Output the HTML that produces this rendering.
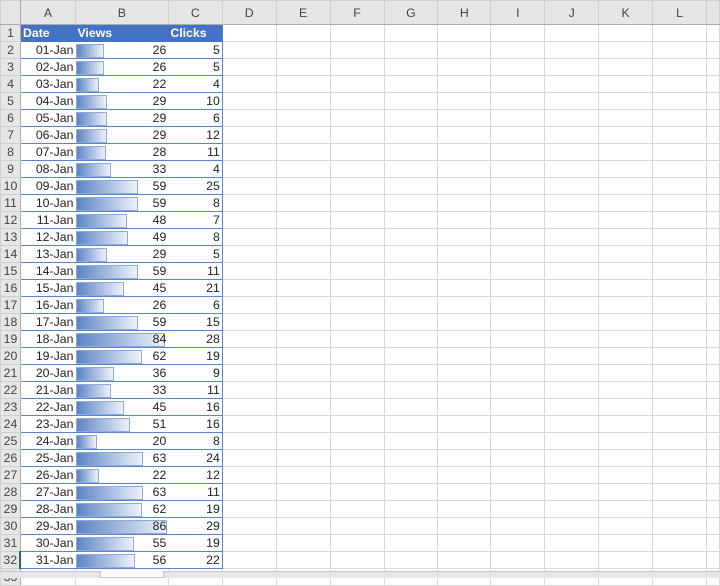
<!DOCTYPE html><html><head><style>
body{margin:0;width:720px;height:577px;overflow:hidden;background:#fff;font-family:"Liberation Sans",Calibri,sans-serif;font-size:12.3px;color:#222}
table{border-collapse:collapse;table-layout:fixed;position:absolute;left:0;top:0}
td{height:16px;border:1px solid #d9d9d9;padding:0 2px;white-space:nowrap;overflow:hidden;line-height:16px}
tr.h td{height:23px;background:#e6e6e6;text-align:center;color:#444;border-color:#cfcfcf;border-bottom:1px solid #ababab}
td.n{background:#e6e6e6;text-align:center;color:#444;border-color:#cfcfcf;border-right:1px solid #ababab;padding:0}
tr.t1 td.d{background:#4472c4;color:#fff;font-weight:bold;text-align:left;border-color:#4472c4}
td.d{text-align:right;border-top:1px solid #5b84d0;border-bottom:1px solid #5b84d0;border-left:none;border-right:none}
td.c{border-right:1px solid #5b84d0!important}
td.b{position:relative}
td.b i{position:absolute;left:1px;top:2px;height:12px;border:1px solid #8fa9d9;background:linear-gradient(to right,#5b84c4,#eef2fa)}
td.b span{position:relative}
</style></head><body>
<table>
<colgroup><col style="width:20px"><col style="width:55px"><col style="width:93px"><col style="width:54px"><col style="width:54px"><col style="width:54px"><col style="width:54px"><col style="width:54px"><col style="width:53px"><col style="width:54px"><col style="width:54px"><col style="width:54px"><col style="width:54px"><col style="width:13px"></colgroup>
<tr class="h"><td style="border-right:1px solid #ababab"></td><td>A</td><td>B</td><td>C</td><td>D</td><td>E</td><td>F</td><td>G</td><td>H</td><td>I</td><td>J</td><td>K</td><td>L</td><td></td></tr>
<tr class="t1"><td class="n">1</td><td class="d">Date</td><td class="d">Views</td><td class="d c">Clicks</td><td></td><td></td><td></td><td></td><td></td><td></td><td></td><td></td><td></td><td></td></tr>
<tr><td class="n">2</td><td class="d">01-Jan</td><td class="d b"><i style="width:26px"></i><span>26</span></td><td class="d c">5</td><td></td><td></td><td></td><td></td><td></td><td></td><td></td><td></td><td></td><td></td></tr>
<tr><td class="n">3</td><td class="d">02-Jan</td><td class="d b"><i style="width:26px"></i><span>26</span></td><td class="d c">5</td><td></td><td></td><td></td><td></td><td></td><td></td><td></td><td></td><td></td><td></td></tr>
<tr><td class="n">4</td><td class="d">03-Jan</td><td class="d b"><i style="width:21px"></i><span>22</span></td><td class="d c">4</td><td></td><td></td><td></td><td></td><td></td><td></td><td></td><td></td><td></td><td></td></tr>
<tr><td class="n">5</td><td class="d">04-Jan</td><td class="d b"><i style="width:29px"></i><span>29</span></td><td class="d c">10</td><td></td><td></td><td></td><td></td><td></td><td></td><td></td><td></td><td></td><td></td></tr>
<tr><td class="n">6</td><td class="d">05-Jan</td><td class="d b"><i style="width:29px"></i><span>29</span></td><td class="d c">6</td><td></td><td></td><td></td><td></td><td></td><td></td><td></td><td></td><td></td><td></td></tr>
<tr><td class="n">7</td><td class="d">06-Jan</td><td class="d b"><i style="width:29px"></i><span>29</span></td><td class="d c">12</td><td></td><td></td><td></td><td></td><td></td><td></td><td></td><td></td><td></td><td></td></tr>
<tr><td class="n">8</td><td class="d">07-Jan</td><td class="d b"><i style="width:28px"></i><span>28</span></td><td class="d c">11</td><td></td><td></td><td></td><td></td><td></td><td></td><td></td><td></td><td></td><td></td></tr>
<tr><td class="n">9</td><td class="d">08-Jan</td><td class="d b"><i style="width:33px"></i><span>33</span></td><td class="d c">4</td><td></td><td></td><td></td><td></td><td></td><td></td><td></td><td></td><td></td><td></td></tr>
<tr><td class="n">10</td><td class="d">09-Jan</td><td class="d b"><i style="width:60px"></i><span>59</span></td><td class="d c">25</td><td></td><td></td><td></td><td></td><td></td><td></td><td></td><td></td><td></td><td></td></tr>
<tr><td class="n">11</td><td class="d">10-Jan</td><td class="d b"><i style="width:60px"></i><span>59</span></td><td class="d c">8</td><td></td><td></td><td></td><td></td><td></td><td></td><td></td><td></td><td></td><td></td></tr>
<tr><td class="n">12</td><td class="d">11-Jan</td><td class="d b"><i style="width:49px"></i><span>48</span></td><td class="d c">7</td><td></td><td></td><td></td><td></td><td></td><td></td><td></td><td></td><td></td><td></td></tr>
<tr><td class="n">13</td><td class="d">12-Jan</td><td class="d b"><i style="width:50px"></i><span>49</span></td><td class="d c">8</td><td></td><td></td><td></td><td></td><td></td><td></td><td></td><td></td><td></td><td></td></tr>
<tr><td class="n">14</td><td class="d">13-Jan</td><td class="d b"><i style="width:29px"></i><span>29</span></td><td class="d c">5</td><td></td><td></td><td></td><td></td><td></td><td></td><td></td><td></td><td></td><td></td></tr>
<tr><td class="n">15</td><td class="d">14-Jan</td><td class="d b"><i style="width:60px"></i><span>59</span></td><td class="d c">11</td><td></td><td></td><td></td><td></td><td></td><td></td><td></td><td></td><td></td><td></td></tr>
<tr><td class="n">16</td><td class="d">15-Jan</td><td class="d b"><i style="width:46px"></i><span>45</span></td><td class="d c">21</td><td></td><td></td><td></td><td></td><td></td><td></td><td></td><td></td><td></td><td></td></tr>
<tr><td class="n">17</td><td class="d">16-Jan</td><td class="d b"><i style="width:26px"></i><span>26</span></td><td class="d c">6</td><td></td><td></td><td></td><td></td><td></td><td></td><td></td><td></td><td></td><td></td></tr>
<tr><td class="n">18</td><td class="d">17-Jan</td><td class="d b"><i style="width:60px"></i><span>59</span></td><td class="d c">15</td><td></td><td></td><td></td><td></td><td></td><td></td><td></td><td></td><td></td><td></td></tr>
<tr><td class="n">19</td><td class="d">18-Jan</td><td class="d b"><i style="width:87px"></i><span>84</span></td><td class="d c">28</td><td></td><td></td><td></td><td></td><td></td><td></td><td></td><td></td><td></td><td></td></tr>
<tr><td class="n">20</td><td class="d">19-Jan</td><td class="d b"><i style="width:64px"></i><span>62</span></td><td class="d c">19</td><td></td><td></td><td></td><td></td><td></td><td></td><td></td><td></td><td></td><td></td></tr>
<tr><td class="n">21</td><td class="d">20-Jan</td><td class="d b"><i style="width:36px"></i><span>36</span></td><td class="d c">9</td><td></td><td></td><td></td><td></td><td></td><td></td><td></td><td></td><td></td><td></td></tr>
<tr><td class="n">22</td><td class="d">21-Jan</td><td class="d b"><i style="width:33px"></i><span>33</span></td><td class="d c">11</td><td></td><td></td><td></td><td></td><td></td><td></td><td></td><td></td><td></td><td></td></tr>
<tr><td class="n">23</td><td class="d">22-Jan</td><td class="d b"><i style="width:46px"></i><span>45</span></td><td class="d c">16</td><td></td><td></td><td></td><td></td><td></td><td></td><td></td><td></td><td></td><td></td></tr>
<tr><td class="n">24</td><td class="d">23-Jan</td><td class="d b"><i style="width:52px"></i><span>51</span></td><td class="d c">16</td><td></td><td></td><td></td><td></td><td></td><td></td><td></td><td></td><td></td><td></td></tr>
<tr><td class="n">25</td><td class="d">24-Jan</td><td class="d b"><i style="width:19px"></i><span>20</span></td><td class="d c">8</td><td></td><td></td><td></td><td></td><td></td><td></td><td></td><td></td><td></td><td></td></tr>
<tr><td class="n">26</td><td class="d">25-Jan</td><td class="d b"><i style="width:65px"></i><span>63</span></td><td class="d c">24</td><td></td><td></td><td></td><td></td><td></td><td></td><td></td><td></td><td></td><td></td></tr>
<tr><td class="n">27</td><td class="d">26-Jan</td><td class="d b"><i style="width:21px"></i><span>22</span></td><td class="d c">12</td><td></td><td></td><td></td><td></td><td></td><td></td><td></td><td></td><td></td><td></td></tr>
<tr><td class="n">28</td><td class="d">27-Jan</td><td class="d b"><i style="width:65px"></i><span>63</span></td><td class="d c">11</td><td></td><td></td><td></td><td></td><td></td><td></td><td></td><td></td><td></td><td></td></tr>
<tr><td class="n">29</td><td class="d">28-Jan</td><td class="d b"><i style="width:64px"></i><span>62</span></td><td class="d c">19</td><td></td><td></td><td></td><td></td><td></td><td></td><td></td><td></td><td></td><td></td></tr>
<tr><td class="n">30</td><td class="d">29-Jan</td><td class="d b"><i style="width:89px"></i><span>86</span></td><td class="d c">29</td><td></td><td></td><td></td><td></td><td></td><td></td><td></td><td></td><td></td><td></td></tr>
<tr><td class="n">31</td><td class="d">30-Jan</td><td class="d b"><i style="width:56px"></i><span>55</span></td><td class="d c">19</td><td></td><td></td><td></td><td></td><td></td><td></td><td></td><td></td><td></td><td></td></tr>
<tr><td class="n" style="border-right:2px solid #217346">32</td><td class="d">31-Jan</td><td class="d b"><i style="width:57px"></i><span>56</span></td><td class="d c">22</td><td></td><td></td><td></td><td></td><td></td><td></td><td></td><td></td><td></td><td></td></tr>
<tr><td class="n">33</td><td></td><td></td><td></td><td></td><td></td><td></td><td></td><td></td><td></td><td></td><td></td><td></td><td></td></tr>
</table>
<div style="position:absolute;left:0;top:571px;width:720px;height:6px;background:#e6e6e6;border-top:1px solid #c6c6c6"></div>
<div style="position:absolute;left:100px;top:571px;width:62px;height:6px;background:#fff;border:1px solid #c6c6c6;border-top:none"></div>
</body></html>
